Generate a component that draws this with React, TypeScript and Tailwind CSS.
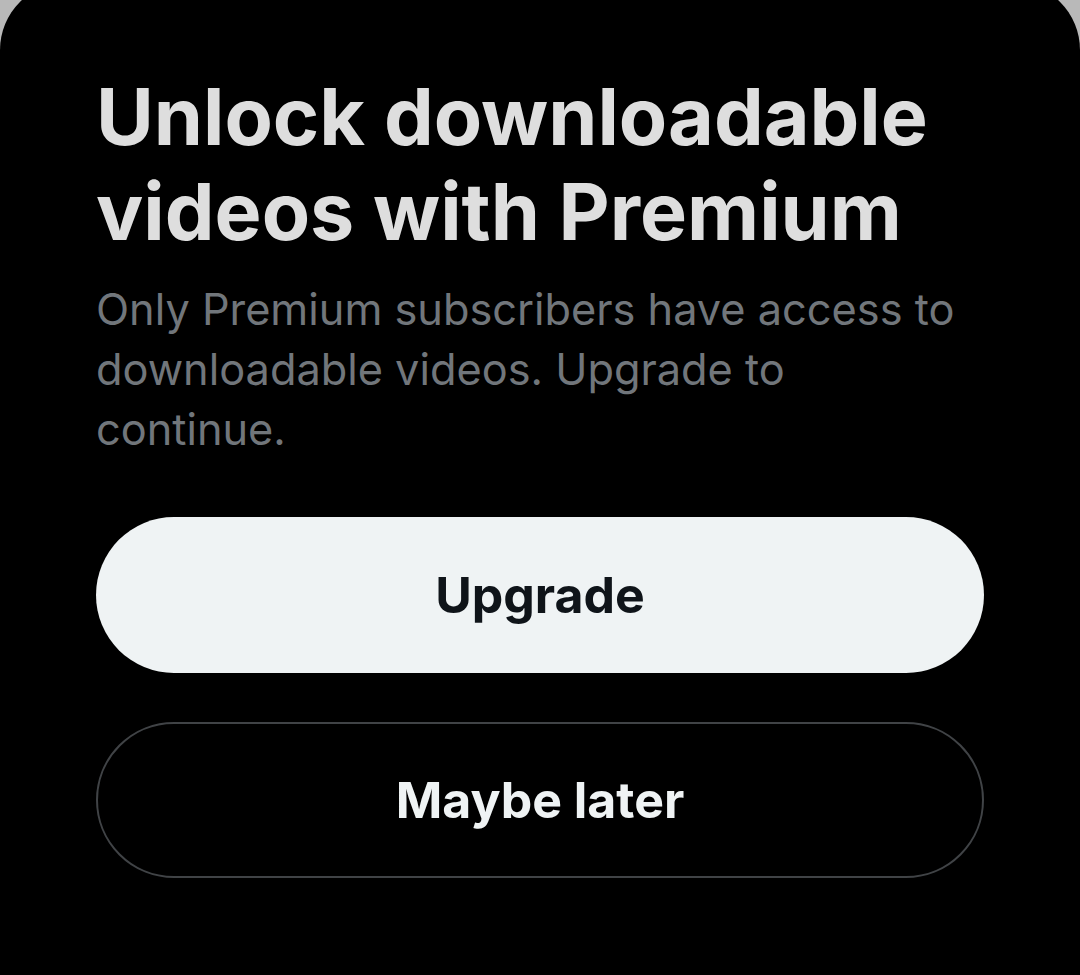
import React from "react";

export default function App() {
  return (
    <div className="h-[975px] w-[1080px] overflow-hidden bg-[#b9b9b9]" style={{ fontFamily: "Inter, 'Noto Sans', sans-serif" }}>
      <div className="-mt-[18px] h-[1000px] rounded-t-[68px] bg-black px-24 pt-[87px]">
        <h1 className="text-[79px] font-bold leading-[95px] text-[#dedede]">
          Unlock downloadable videos with Premium
        </h1>
        <p className="mt-5 text-[43.3px] leading-[60px] text-[#71767b]">
          Only Premium subscribers have access to downloadable videos. Upgrade to continue.
        </p>
        <button className="mt-[58px] flex h-[156px] w-full items-center justify-center rounded-full bg-[#eff3f4] text-[50px] font-bold text-[#0f1419]">
          Upgrade
        </button>
        <button className="mt-[49px] flex h-[156px] w-full items-center justify-center rounded-full border-2 border-[#404346] bg-black text-[50px] font-bold text-[#eff3f4]">
          Maybe later
        </button>
      </div>
    </div>
  );
}
